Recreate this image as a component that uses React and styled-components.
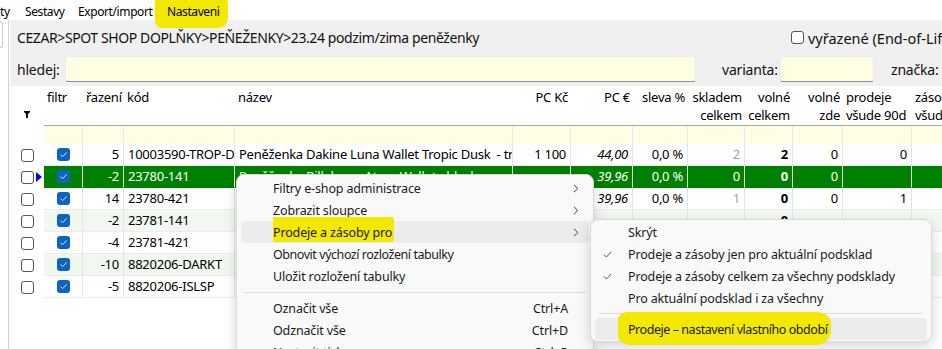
import React from "react";
import styled, { createGlobalStyle } from "styled-components";

const FONT = `"Noto Sans", "Segoe UI", "Liberation Sans", sans-serif`;
const COLS = "34px 39px 41px 111px 278px 58px 62px 55px 57px 48px 50px 69px 40px";
const MARK = "#f3e900";

const GlobalStyle = createGlobalStyle`
  html, body { margin: 0; padding: 0; background: #ffffff; }
  body { font-family: ${FONT}; color: #000; }
  #root { width: 942px; height: 349px; }
`;

const Page = styled.div`
  position: relative;
  width: 942px;
  height: 349px;
  overflow: hidden;
  background: #fff;
`;

/* top menu bar */
const MenuBar = styled.div`
  position: relative;
  z-index: 2;
  display: flex;
  align-items: center;
  height: 20px;
  padding-top: 2px;
  box-sizing: border-box;
  font-size: 12px;
  letter-spacing: -0.4px;
  background: #fff;
`;

const BarItem = styled.span`
  position: relative;
  z-index: 0;
  flex: 0 0 ${(p) => p.$w}px;
  white-space: nowrap;

  & > span {
    position: relative;
  }
  & > span::before {
    content: "";
    display: ${(p) => (p.$marked ? "block" : "none")};
    position: absolute;
    left: -12px;
    right: -9px;
    top: -4px;
    bottom: -8px;
    background: ${MARK};
    border-radius: 2px 4px 10px 7px;
    z-index: -1;
  }
`;

/* body */
const Workspace = styled.div`
  display: flex;
  height: 329px;
`;

const SideStrip = styled.div`
  flex: 0 0 8px;
  border-right: 1px solid #d2d2d2;
  padding-top: 1px;
`;

const SideTab = styled.div`
  width: 2px;
  height: 25px;
  border: 1px solid #cdcdcd;
  border-left: none;
  border-radius: 0 3px 3px 0;
`;

const MainPanel = styled.div`
  flex: 1;
  min-width: 0;
  padding-left: 1px;
  display: flex;
  flex-direction: column;
  overflow: hidden;
`;

const FilterPanel = styled.div`
  background: #f0f0f0;
  height: 66px;
  padding-left: 7px;
  box-sizing: border-box;
  display: flex;
  flex-direction: column;
`;

const CrumbRow = styled.div`
  display: flex;
  align-items: center;
  height: 35px;
  white-space: nowrap;
`;

const Crumb = styled.div`
  flex: 0 0 774px;
  font-size: 14px;
  letter-spacing: -0.4px;
  color: #111;
`;

const EolCheck = styled.label`
  display: flex;
  align-items: center;
  gap: 4px;
  flex-shrink: 0;
  font-size: 14.5px;
  color: #111;
`;

const Box = styled.span`
  width: 13px;
  height: 13px;
  box-sizing: border-box;
  border: 1px solid #555;
  border-radius: 3px;
  background: #fff;
  flex-shrink: 0;
`;

const SearchRow = styled.div`
  display: flex;
  align-items: center;
  margin-top: 1px;
  height: 26px;
  white-space: nowrap;
`;

const FieldLabel = styled.span`
  flex: 0 0 ${(p) => p.$w}px;
  font-size: 14px;
  letter-spacing: -0.2px;
  color: #111;
  margin-left: ${(p) => p.$ml || 0}px;
`;

const Field = styled.div`
  flex: 0 0 ${(p) => p.$w}px;
  height: 26px;
  box-sizing: border-box;
  background: #fffde2;
  border: 1px solid #ececec;
  border-bottom-color: #8d8d8d;
  border-radius: 3px;
`;

/* grid */
const Table = styled.div`
  flex: 1;
  background: #fff;
  font-size: 13px;
  letter-spacing: -0.25px;
`;

const GridRow = styled.div`
  display: grid;
  grid-template-columns: ${COLS};
  height: ${(p) => p.$h}px;
`;

const HeadCell = styled.div`
  box-sizing: border-box;
  padding: 2px 3px 0;
  line-height: 18px;
  white-space: pre;
  overflow: hidden;
  text-align: ${(p) => p.$align || "left"};
  border-bottom: 1px solid #a9a9a9;
`;

const HeadLead = styled.div`
  display: flex;
  align-items: flex-end;
  padding: 0 0 8px 14px;
`;

const FilterCell = styled.div`
  box-sizing: border-box;
  background: #fffde3;
  border-right: 1px solid #e9e9e9;
`;

const Cell = styled.div`
  box-sizing: border-box;
  padding: 0 4px;
  line-height: 21px;
  white-space: pre;
  overflow: hidden;
  text-align: ${(p) => p.$align || "left"};
  background: ${(p) => (p.$sel ? "#008000" : p.$stripe ? "#f1f8ef" : "#fff")};
  color: ${(p) => (p.$sel ? "#fff" : p.$muted ? "#a3a3a3" : "#000")};
  font-style: ${(p) => (p.$italic ? "italic" : "normal")};
  font-weight: ${(p) => (p.$bold ? 700 : 400)};
  border-right: 1px solid ${(p) => (p.$sel ? "#e8f3e8" : "#e4e4e4")};
  border-bottom: 1px solid ${(p) => (p.$sel ? "#008000" : "#ececec")};
`;

const CheckCell = styled(Cell)`
  display: flex;
  align-items: center;
  justify-content: center;
  padding: 0;
`;

const LeadCell = styled.div`
  display: flex;
  align-items: center;
  padding-left: 11px;
  gap: 2px;
`;

const BlueCheck = styled.span`
  display: inline-flex;
  align-items: center;
  justify-content: center;
  width: 13px;
  height: 13px;
  border-radius: 3px;
  background: #0b63c3;
`;

/* context menus */
const Menu = styled.div`
  position: absolute;
  left: ${(p) => p.$x}px;
  top: ${(p) => p.$y}px;
  width: ${(p) => p.$w}px;
  box-sizing: border-box;
  padding: ${(p) => p.$pad}px 0;
  background: #f9f9f9;
  border: 1px solid #d9d9d9;
  border-radius: 8px;
  box-shadow: 0 5px 14px rgba(0, 0, 0, 0.16);
  z-index: 10;
  font-size: 12.5px;
  letter-spacing: -0.15px;
  color: #1b1b1b;
`;

const MenuItem = styled.div`
  position: relative;
  z-index: 0;
  display: flex;
  align-items: center;
  height: 22px;
  margin: 0 4px;
  padding-right: 10px;
  border-radius: 4px;
  white-space: nowrap;
  background: ${(p) => (p.$active ? "#ececec" : "transparent")};
`;

const Slot = styled.span`
  flex: 0 0 ${(p) => p.$w}px;
  box-sizing: border-box;
  padding-left: 8px;
  display: flex;
  align-items: center;
`;

const MenuText = styled.span`
  flex: 1;
  letter-spacing: ${(p) => (p.$tight ? "-0.45px" : "inherit")};
`;

const Shortcut = styled.span`
  margin-right: 11px;
`;

const Marker = styled.span`
  position: relative;
  &::before {
    content: "";
    position: absolute;
    inset: ${(p) => p.$inset};
    background: ${MARK};
    border-radius: ${(p) => p.$radius || "2px"};
    z-index: -1;
  }
`;

const Separator = styled.div`
  height: ${(p) => p.$h}px;
  display: flex;
  align-items: center;
  margin: 0 ${(p) => p.$mr}px 0 ${(p) => p.$ml}px;
  &::after {
    content: "";
    flex: 1;
    height: 1px;
    background: #dcdcdc;
  }
`;

const Chevron = () => (
  <svg width="6" height="9" viewBox="0 0 6 9">
    <path d="M1 0.8 L4.8 4.5 L1 8.2" fill="none" stroke="#404040" strokeWidth="1" />
  </svg>
);

const Tick = () => (
  <svg width="9" height="7" viewBox="0 0 9 7">
    <path d="M0.8 3.4 L3.4 6 L8.3 0.8" fill="none" stroke="#5a5a5a" strokeWidth="1" />
  </svg>
);

const WhiteTick = () => (
  <svg width="9" height="7" viewBox="0 0 9 7">
    <path d="M1.5 3.6 L3.7 5.6 L7.6 1.4" fill="none" stroke="#dfe9f7" strokeWidth="1" />
  </svg>
);

const FunnelIcon = () => (
  <svg width="6" height="7" viewBox="0 0 6 7">
    <path d="M0 0 H6 V1 L4 3 V7 H2 V3 L0 1 Z" fill="#000" />
  </svg>
);

const Pointer = () => (
  <svg width="6" height="10" viewBox="0 0 6 10">
    <polygon points="0,0 6,5 0,10" fill="#0000ff" />
  </svg>
);

const rows = [
  { sort: "5", code: "10003590-TROP-D", name: "Peněženka Dakine Luna Wallet Tropic Dusk  - tropic dusk", kc: "1 100", eur: "44,00", sleva: "0,0 %", sklad: "2", volne: "2", zde: "0", prodeje: "0" },
  { sort: "-2", code: "23780-141", name: "Peněženka Billabong Atom Wallet - black", kc: "", eur: "39,96", sleva: "0,0 %", sklad: "0", volne: "0", zde: "0", prodeje: "", selected: true },
  { sort: "14", code: "23780-421", name: "Peněženka Billabong Atom Wallet - navy", kc: "", eur: "39,96", sleva: "0,0 %", sklad: "1", volne: "0", zde: "0", prodeje: "1" },
  { sort: "-2", code: "23781-141", name: "Peněženka Billabong Walled Lite - black", kc: "", eur: "", sleva: "", sklad: "", volne: "0", zde: "", prodeje: "" },
  { sort: "-4", code: "23781-421", name: "Peněženka Billabong Walled Lite - navy", kc: "", eur: "", sleva: "", sklad: "", volne: "", zde: "", prodeje: "" },
  { sort: "-10", code: "8820206-DARKT", name: "Peněženka Rip Curl Surf Wallet - dark", kc: "", eur: "", sleva: "", sklad: "", volne: "", zde: "", prodeje: "" },
  { sort: "-5", code: "8820206-ISLSP", name: "Peněženka Rip Curl Surf Wallet - island", kc: "", eur: "", sleva: "", sklad: "", volne: "", zde: "", prodeje: "" },
];

const headers = [
  { text: "filtr" },
  { text: "řazení" },
  { text: "kód" },
  { text: "název" },
  { text: "PC Kč", align: "right" },
  { text: "PC €", align: "right" },
  { text: "sleva %", align: "right" },
  { text: "skladem\ncelkem", align: "right" },
  { text: "volné\ncelkem", align: "right" },
  { text: "volné\nzde", align: "right" },
  { text: "prodeje\nvšude 90d" },
  { text: "záso\nvšud" },
];

const DataRow = ({ row, stripe }) => {
  const s = { $sel: row.selected, $stripe: stripe };
  return (
    <GridRow $h={22}>
      <LeadCell>
        <Box />
        {row.selected && <Pointer />}
      </LeadCell>
      <CheckCell {...s}>
        <BlueCheck>
          <WhiteTick />
        </BlueCheck>
      </CheckCell>
      <Cell {...s} $align="right">{row.sort}</Cell>
      <Cell {...s}>{row.code}</Cell>
      <Cell {...s}>{row.name}</Cell>
      <Cell {...s} $align="right">{row.kc}</Cell>
      <Cell {...s} $align="right" $italic>{row.eur}</Cell>
      <Cell {...s} $align="right">{row.sleva}</Cell>
      <Cell {...s} $align="right" $muted>{row.sklad}</Cell>
      <Cell {...s} $align="right" $bold>{row.volne}</Cell>
      <Cell {...s} $align="right">{row.zde}</Cell>
      <Cell {...s} $align="right">{row.prodeje}</Cell>
      <Cell {...s}></Cell>
    </GridRow>
  );
};

export default function App() {
  return (
    <Page>
      <GlobalStyle />
      <MenuBar>
        <BarItem $w={25}><span>ty</span></BarItem>
        <BarItem $w={53}><span>Sestavy</span></BarItem>
        <BarItem $w={89}><span>Export/import</span></BarItem>
        <BarItem $w={70} $marked><span>Nastaveni</span></BarItem>
      </MenuBar>

      <Workspace>
        <SideStrip>
          <SideTab />
        </SideStrip>
        <MainPanel>
          <FilterPanel>
            <CrumbRow>
              <Crumb>CEZAR&gt;SPOT SHOP DOPLŇKY&gt;PEŇEŽENKY&gt;23.24 podzim/zima peněženky</Crumb>
              <EolCheck>
                <Box />
                vyřazené (End-of-Life)
              </EolCheck>
            </CrumbRow>
            <SearchRow>
              <FieldLabel $w={48}>hledej:</FieldLabel>
              <Field $w={631} />
              <FieldLabel $w={58} $ml={26}>varianta:</FieldLabel>
              <Field $w={94} />
              <FieldLabel $w={60} $ml={17}>značka:</FieldLabel>
            </SearchRow>
          </FilterPanel>

          <Table>
            <GridRow $h={40}>
              <HeadLead>
                <FunnelIcon />
              </HeadLead>
              {headers.map((h) => (
                <HeadCell key={h.text} $align={h.align}>
                  {h.text}
                </HeadCell>
              ))}
            </GridRow>
            <GridRow $h={18}>
              <div />
              {headers.map((h) => (
                <FilterCell key={h.text} />
              ))}
            </GridRow>
            {rows.map((r, i) => (
              <DataRow key={r.code + i} row={r} stripe={i % 2 === 1} />
            ))}
          </Table>
        </MainPanel>
      </Workspace>

      <Menu $x={236} $y={174} $w={358} $pad={2}>
        <MenuItem>
          <Slot $w={32} />
          <MenuText>Filtry e-shop administrace</MenuText>
          <Chevron />
        </MenuItem>
        <MenuItem>
          <Slot $w={32} />
          <MenuText>Zobrazit sloupce</MenuText>
          <Chevron />
        </MenuItem>
        <MenuItem $active>
          <Slot $w={32} />
          <MenuText>
            <Marker $inset="-7px -2px -1px 0" $radius="1px 3px 2px 1px">Prodeje a zásoby pro</Marker>
          </MenuText>
          <Chevron />
        </MenuItem>
        <MenuItem>
          <Slot $w={32} />
          <MenuText $tight>Obnovit výchozí rozložení tabulky</MenuText>
        </MenuItem>
        <MenuItem>
          <Slot $w={32} />
          <MenuText>Uložit rozložení tabulky</MenuText>
        </MenuItem>
        <Separator $h={10} $ml={7} $mr={7} />
        <MenuItem>
          <Slot $w={32} />
          <MenuText>Označit vše</MenuText>
          <Shortcut>Ctrl+A</Shortcut>
        </MenuItem>
        <MenuItem>
          <Slot $w={32} />
          <MenuText>Odznačit vše</MenuText>
          <Shortcut>Ctrl+D</Shortcut>
        </MenuItem>
        <MenuItem>
          <Slot $w={32} />
          <MenuText>Nastavit tisk</MenuText>
          <Shortcut>Ctrl+P</Shortcut>
        </MenuItem>
      </Menu>

      <Menu $x={590} $y={219} $w={342} $pad={1}>
        <MenuItem>
          <Slot $w={33} />
          <MenuText>Skrýt</MenuText>
        </MenuItem>
        <MenuItem>
          <Slot $w={33}>
            <Tick />
          </Slot>
          <MenuText>Prodeje a zásoby jen pro aktuální podsklad</MenuText>
        </MenuItem>
        <MenuItem>
          <Slot $w={33}>
            <Tick />
          </Slot>
          <MenuText>Prodeje a zásoby celkem za všechny podsklady</MenuText>
        </MenuItem>
        <MenuItem>
          <Slot $w={33} />
          <MenuText>Pro aktuální podsklad i za všechny</MenuText>
        </MenuItem>
        <Separator $h={9} $ml={7} $mr={8} />
        <MenuItem $active>
          <Slot $w={33} />
          <MenuText $tight>
            <Marker $inset="-9px -4px -7px -10px" $radius="10px 14px 16px 12px / 8px 12px 14px 10px">
              Prodeje – nastavení vlastního období
            </Marker>
          </MenuText>
        </MenuItem>
      </Menu>
    </Page>
  );
}
